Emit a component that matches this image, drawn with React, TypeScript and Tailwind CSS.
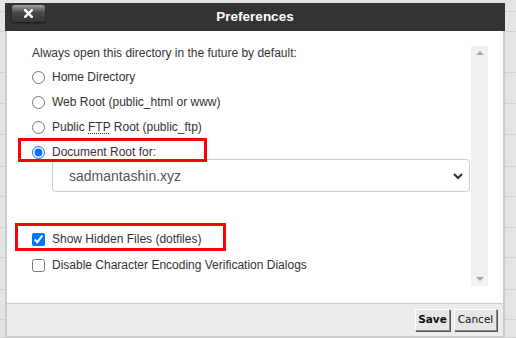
import React from "react"

const bgRows = [
  "h-[12px]",
  "h-[20px]",
  "h-[41px]",
  "h-[31px]",
  "h-[31px]",
  "h-[32px]",
  "h-[30px]",
  "h-[31px]",
  "h-[30px]",
  "h-[32px]",
  "h-[30px]",
  "h-[18px]",
]

function RadioRow({ label, checked, className = "" }: { label: React.ReactNode; checked?: boolean; className?: string }) {
  return (
    <label className={`flex items-center h-[14px] ${className}`}>
      <input
        type="radio"
        name="dir"
        defaultChecked={checked}
        className="m-0 w-[13px] h-[13px] accent-[#0075ff]"
      />
      <span className="ml-[7px]">{label}</span>
    </label>
  )
}

function CheckRow({ label, checked, className = "" }: { label: string; checked?: boolean; className?: string }) {
  return (
    <label className={`flex items-center h-[14px] ${className}`}>
      <input
        type="checkbox"
        defaultChecked={checked}
        className="m-0 w-[13px] h-[13px] accent-[#0075ff]"
      />
      <span className="ml-[7px]">{label}</span>
    </label>
  )
}

export default function App() {
  return (
    <div className="relative w-[516px] h-[338px] overflow-hidden bg-[#e4e4e4] font-['Liberation_Sans',Arial,sans-serif]">
      {/* table rows behind the dialog */}
      <div className="flex flex-col">
        {bgRows.map((h, i) => (
          <div key={i} className={`${h} border-b border-[#d2d2d2]`} />
        ))}
      </div>

      {/* dialog */}
      <div className="absolute left-[5px] top-[3px] w-[500px] h-[335px] flex flex-col">
        {/* title bar */}
        <div className="h-[28px] bg-[#333333] grid grid-cols-[1fr_auto_1fr] items-center">
          <div className="flex items-start h-full pl-[7px] pt-[2px]">
            <button className="w-[33px] h-[17px] rounded-[3px] flex items-center justify-center bg-gradient-to-b from-[#a3a3a3] via-[#4a4646] via-45% to-[#3a3636] shadow-[0_1px_2px_rgba(0,0,0,0.6)]">
              <svg width="9" height="9" viewBox="0 0 9 9">
                <path d="M1.2 1.2 L7.8 7.8 M7.8 1.2 L1.2 7.8" stroke="#fff" strokeWidth="2.4" strokeLinecap="square" />
              </svg>
            </button>
          </div>
          <div className="text-white font-bold text-[13.5px] leading-none">Preferences</div>
          <div />
        </div>

        {/* body */}
        <div className="h-[272px] bg-white border-x-2 border-[#cccccc] pt-[15px] pb-[17px] pl-[8px] pr-[15px] flex">
          <div className="relative flex-1 pl-[17px] text-[12px] text-[#333] leading-[14px]">
            <div>Always open this directory in the future by default:</div>
            <RadioRow className="mt-[10px]" label="Home Directory" />
            <RadioRow className="mt-[11px]" label="Web Root (public_html or www)" />
            <RadioRow
              className="mt-[11px]"
              label={
                <>
                  Public <abbr className="underline decoration-dotted underline-offset-2 no-underline-skip">FTP</abbr> Root (public_ftp)
                </>
              }
            />
            <RadioRow className="mt-[11px]" label="Document Root for:" checked />

            <div className="ml-[20px] mr-[1px] mt-0 h-[33px] border border-[#cccccc] rounded-[4px] flex items-center justify-between pl-[16px] pr-[5px]">
              <span className="text-[14px] text-[#555]">sadmantashin.xyz</span>
              <svg width="12" height="8" viewBox="0 0 12 8">
                <path d="M2 2 L6 6 L10 2" fill="none" stroke="#333" strokeWidth="2.2" />
              </svg>
            </div>

            <CheckRow className="mt-[40px]" label="Show Hidden Files (dotfiles)" checked />
            <CheckRow className="mt-[12px]" label="Disable Character Encoding Verification Dialogs" />

            {/* annotations */}
            <div className="absolute left-[3px] top-[92px] w-[189px] h-[24px] border-[3px] border-[#ff0000]" />
            <div className="absolute left-0 top-[177px] w-[211px] h-[28px] border-[3px] border-[#ff0000]" />
          </div>

          {/* scrollbar */}
          <div className="w-[17px] bg-[#f1f1f1] flex flex-col items-center justify-between py-[5px]">
            <svg width="8" height="4" viewBox="0 0 8 4">
              <path d="M0 4 L4 0 L8 4 Z" fill="#a3a3a3" />
            </svg>
            <svg width="8" height="4" viewBox="0 0 8 4">
              <path d="M0 0 L8 0 L4 4 Z" fill="#a3a3a3" />
            </svg>
          </div>
        </div>

        {/* footer */}
        <div className="h-[35px] bg-[#ececec] border-t border-[#cccccc] border-x-2 border-b-2 flex items-center justify-end gap-[4px] pr-[6px] font-['DejaVu_Sans',Tahoma,sans-serif] text-[10.5px] text-[#111]">
          <button className="h-[22px] w-[35px] bg-[#e6e6e6] border border-t-white border-l-white border-r-[#8a8a8a] border-b-[#8a8a8a] shadow-[1px_1px_0_#555] font-bold">
            Save
          </button>
          <button className="h-[22px] w-[43px] bg-[#e6e6e6] border border-t-white border-l-white border-r-[#8a8a8a] border-b-[#8a8a8a] shadow-[1px_1px_0_#555]">
            Cancel
          </button>
        </div>
      </div>
    </div>
  )
}
